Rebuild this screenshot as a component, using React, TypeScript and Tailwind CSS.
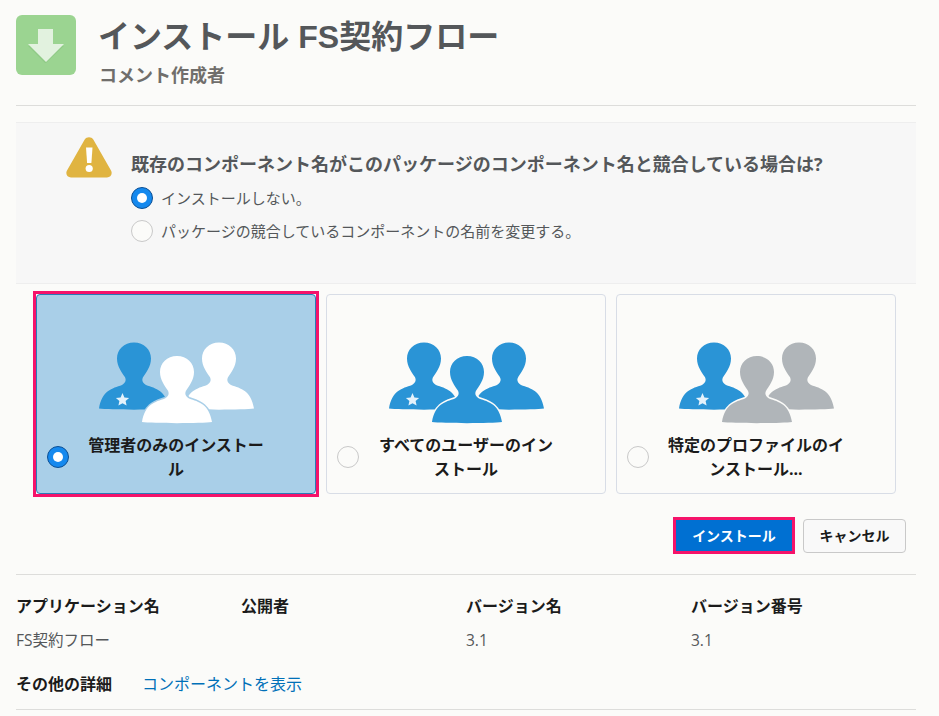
const PERSON =
  "M0 0C10 0 17 7 17 16C17 24 12 30 9.5 34C7.5 37 8 40 12 42.5C22 46 32 48 35 66C25 67.5 -25 67.5 -35 66C-32 48 -22 46 -12 42.5C-8 40 -7.5 37 -9.5 34C-12 30 -17 24 -17 16C-17 7 -10 0 0 0Z";

function People({ others, bg }: { others: string; bg: string }) {
  return (
    <svg width="160" height="84" viewBox="0 0 160 84" className="block">
      <path d={PERSON} transform="translate(123 0.5)" fill={others} />
      <path d={PERSON} transform="translate(38 0.5)" fill="#2a94d6" />
      <path
        d="M0-6.5L1.9-2.1L6.6-1.6L3.1 1.5L4.1 6L0 3.7L-4.1 6L-3.1 1.5L-6.6-1.6L-1.9-2.1Z"
        transform="translate(26.5 57.5)"
        fill="#e4f2fb"
      />
      <path
        d={PERSON}
        transform="translate(81 14)"
        fill={others}
        stroke={bg}
        strokeWidth="3"
        style={{ paintOrder: "stroke" }}
      />
    </svg>
  );
}

function Radio({ checked }: { checked?: boolean }) {
  return checked ? (
    <span className="flex h-[22px] w-[22px] shrink-0 items-center justify-center rounded-full border border-[#0b4f94] bg-[#1589ee]">
      <span className="h-[10px] w-[10px] rounded-full bg-white" />
    </span>
  ) : (
    <span className="block h-[22px] w-[22px] shrink-0 rounded-full border border-[#c9c9c9] bg-[#fbfbf9]" />
  );
}

function Card({
  lines,
  others,
  selected,
}: {
  lines: string[];
  others: string;
  selected?: boolean;
}) {
  const bg = selected ? "#a9cfe8" : "#fbfbf9";
  return (
    <div className={selected ? "outline-[3px] outline-[#f5136a]" : ""}>
      <div
        className={
          selected
            ? "h-[200px] w-[280px] rounded border border-[#2a7ab8] bg-[#a9cfe8]"
            : "h-[200px] w-[280px] rounded border border-[#d8dde6] bg-[#fbfbf9]"
        }
      >
        <div className="flex justify-center pt-[47px]">
          <People others={others} bg={bg} />
        </div>
        <div className="mt-[7px] grid grid-cols-[1fr_180px_1fr]">
          <div className="flex items-center pl-[10px]">
            <Radio checked={selected} />
          </div>
          <div className="text-center text-base leading-[24px] font-bold text-[#1b1b1b]">
            {lines.map((l) => (
              <div key={l}>{l}</div>
            ))}
          </div>
        </div>
      </div>
    </div>
  );
}

function Info({ label, value }: { label: string; value: string }) {
  return (
    <div className="w-[225px]">
      <div className="text-base leading-[22px] font-bold text-[#1b1b1b]">{label}</div>
      <div className="mt-[12px] text-[15.5px] leading-[22px] text-[#54575a]">{value || "\u00a0"}</div>
    </div>
  );
}

export default function App() {
  return (
    <div
      className="h-[716px] w-[939px] overflow-hidden bg-[#fbfbf9] pl-4 text-[#54575a]"
      style={{ fontFamily: '"Open Sans", "Noto Sans CJK JP", sans-serif' }}
    >
      <div className="w-[900px]">
        <header className="flex h-[106px] border-b border-[#dddddb] pt-[15px]">
          <div className="flex h-[60px] w-[60px] items-center justify-center rounded-md bg-[#9bd491]">
            <svg width="40" height="36" viewBox="0 0 40 36">
              <path d="M12 3H27V18H38L19.5 35.5L2 18H12Z" fill="#7cb673" opacity="0.35" transform="translate(0 1)" />
              <path d="M12 2H27V17H38L20 35L2 17H12Z" fill="#e2f2df" />
            </svg>
          </div>
          <div className="ml-[22px]">
            <h1 className="font-['Liberation_Sans','Noto_Sans_CJK_JP',sans-serif] text-[32px] leading-[44px] font-bold text-[#54575a]">
              インストール FS契約フロー
            </h1>
            <p className="mt-[4px] ml-px text-lg leading-[24px] font-bold text-[#706e6b]">コメント作成者</p>
          </div>
        </header>

        <section className="mt-4 h-[162px] border-y border-[#eeeeee] bg-[#f7f7f7] pl-[50px] pt-[14px]">
          <div className="flex">
            <svg width="46" height="41" viewBox="0 0 46 41" className="shrink-0">
              <path
                d="M18.7 2.6C20.6-.6 25.4-.6 27.3 2.6L45 33.6C46.9 36.9 44.6 40.5 41 40.5H5C1.4 40.5-.9 36.9 1 33.6Z"
                fill="#e0b441"
              />
              <path d="M20 10.5H26.5L25.4 26H21.1Z" fill="#fff" />
              <circle cx="23.2" cy="31.5" r="3.6" fill="#fff" />
            </svg>
            <div className="ml-[19px] pt-[14px]">
              <p className="text-lg leading-[26px] font-bold text-[#54575a]">
                既存のコンポーネント名がこのパッケージのコンポーネント名と競合している場合は?
              </p>
              <div className="mt-[10px] flex flex-col gap-[11px] text-[15px] leading-[22px]">
                <label className="flex items-center gap-2">
                  <Radio checked />
                  <span>インストールしない。</span>
                </label>
                <label className="flex items-center gap-2">
                  <Radio />
                  <span>パッケージの競合しているコンポーネントの名前を変更する。</span>
                </label>
              </div>
            </div>
          </div>
        </section>

        <div className="mt-[10px] flex gap-[10px] pl-5">
          <Card selected others="#ffffff" lines={["管理者のみのインストー", "ル"]} />
          <Card others="#2a94d6" lines={["すべてのユーザーのイン", "ストール"]} />
          <Card others="#b0b5b9" lines={["特定のプロファイルのイ", "ンストール..."]} />
        </div>

        <div className="mt-[26px] flex w-[890px] justify-end gap-[11px]">
          <button className="h-[31px] w-[116px] bg-[#0070d2] text-sm font-bold text-white outline-[3px] outline-[#f5136a]">
            インストール
          </button>
          <button className="-mt-px h-[34px] w-[103px] rounded border border-[#c9c9c9] bg-[#f9f9f9] text-sm font-bold text-[#1b1b1b]">
            キャンセル
          </button>
        </div>

        <div className="mt-[21px] border-t border-[#dddddb] pt-[20px]">
          <div className="flex">
            <Info label="アプリケーション名" value="FS契約フロー" />
            <Info label="公開者" value="" />
            <Info label="バージョン名" value="3.1" />
            <Info label="バージョン番号" value="3.1" />
          </div>
          <div className="mt-[22px] flex text-base leading-[22px]">
            <span className="font-bold text-[#1b1b1b]">その他の詳細</span>
            <a className="ml-[30px] text-[#0070b8]">コンポーネントを表示</a>
          </div>
        </div>
        <div className="mt-[14px] border-t border-[#dddddb]" />
      </div>
    </div>
  );
}
